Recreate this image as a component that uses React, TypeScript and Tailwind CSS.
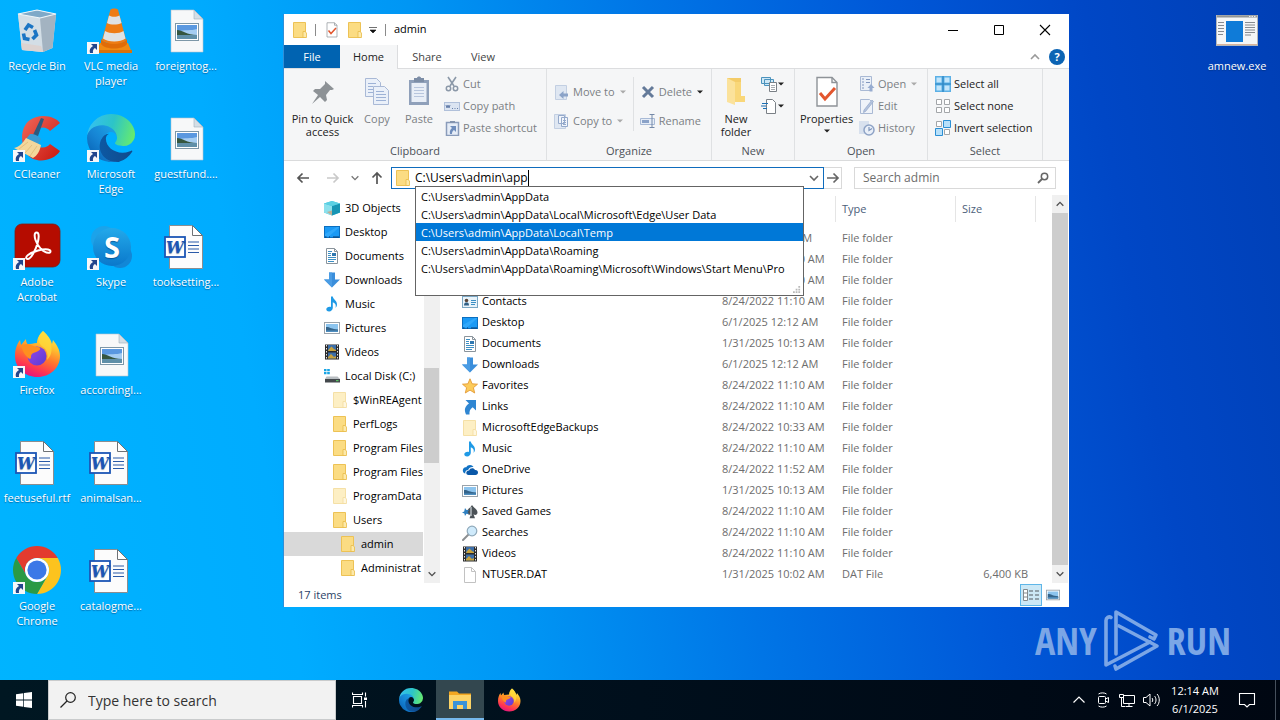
import React from "react";

type IconProps = { className?: string };
type Draw = (p: IconProps) => React.ReactElement;

/* ---------- small icons (16 unit grid) ---------- */

const Folder: Draw = ({ className = "size-4" }) => (
  <svg viewBox="0 0 16 16" className={className} aria-hidden="true">
    <path d="M1.500 .5h12v15h-12z" fill="#fbdc83" stroke="#edc255" />
    <path d="M11 9.500h2l1.500 1.500v4.500H11z" fill="#fde9a9" stroke="#e9bb49" strokeWidth=".8" />
  </svg>
);

const PaleFolder: Draw = ({ className = "size-4" }) => (
  <svg viewBox="0 0 16 16" className={className} aria-hidden="true">
    <path d="M1.500 .5h12v15h-12z" fill="#fdefc4" stroke="#f5e0a6" />
    <path d="M11 9.500h2l1.500 1.500v4.500H11z" fill="#fff6dc" stroke="#f2dc9e" strokeWidth=".8" />
  </svg>
);

const Objects3D: Draw = ({ className = "size-4" }) => (
  <svg viewBox="0 0 16 16" className={className} aria-hidden="true">
    <path d="M0 3.500 8 1l8 2.500v9L8 15.500l-8-3z" fill="#3fc3dc" />
    <path d="M0 3.500 8 6v9.500l-8-3z" fill="#8be0ec" />
    <path d="M8 6l8-2.500v9l-8 3z" fill="#1795b4" />
    <path d="M0 3.500 8 1l8 2.500L8 6z" fill="#5bd0e3" />
    <path d="M3 12l5-1.500v5z" fill="#e08a5a" opacity=".6" />
  </svg>
);

const DesktopIcon: Draw = ({ className = "size-4" }) => (
  <svg viewBox="0 0 16 16" className={className} aria-hidden="true">
    <rect x=".5" y="2.500" width="15" height="11" fill="#1b9af5" stroke="#0b6fc0" />
    <path d="M1 10 13 3h2.500L5 12.500H1z" fill="#3fb2ff" opacity=".6" />
    <path d="M1 13h1.500M5 13h1M9 13h6" stroke="#0a3d70" />
  </svg>
);

const DocumentIcon: Draw = ({ className = "size-4" }) => (
  <svg viewBox="0 0 16 16" className={className} aria-hidden="true">
    <path d="M2.500.5h8l3 3v12h-11z" fill="#fff" stroke="#8a949c" />
    <path d="M10.500.5v3h3" fill="none" stroke="#8a949c" />
    <path d="M4 3.500h4M4 5.500h3M4 7.500h3M4 9.500h8M4 11.500h8M4 13.500h6" stroke="#3c8fc4" />
    <rect x="8" y="5" width="4" height="3" fill="#2f78b0" />
  </svg>
);

const DownloadIcon: Draw = ({ className = "size-4" }) => (
  <svg viewBox="0 0 16 16" className={className} aria-hidden="true">
    <path d="M5 .5h6v7h5l-8 8-8-8h5z" fill="#3a8edb" />
    <path d="M5 .5h3v15l-8-8h5z" fill="#4a9ce4" />
  </svg>
);

const MusicIcon: Draw = ({ className = "size-4" }) => (
  <svg viewBox="0 0 16 16" className={className} aria-hidden="true">
    <path d="M7 .5h1.800c.3 3 4.400 4 4.200 8.300-.1 1.500-.9 2.500-1.500 3.200.8-3 .2-4.800-2.700-5.800v5.600c0 2-1.600 3.700-3.700 3.700S2.300 14.400 2.300 13.200c0-1.700 2.400-3 4.700-2.300z" fill="#1f9ae6" />
  </svg>
);

const PictureIcon: Draw = ({ className = "size-4" }) => (
  <svg viewBox="0 0 16 16" className={className} aria-hidden="true">
    <rect x=".5" y="2.500" width="15" height="11" fill="#fff" stroke="#9aa3ab" />
    <path d="M2 4h12v8H2z" fill="#8cc4ee" />
    <path d="M2 7c3-.6 5 2 12 2.500V12H2z" fill="#35648a" />
    <path d="M2 10.500h12V12H2z" fill="#4f8fc0" />
  </svg>
);

const VideoIcon: Draw = ({ className = "size-4" }) => (
  <svg viewBox="0 0 16 16" className={className} aria-hidden="true">
    <rect x="1" y=".5" width="14" height="15" fill="#2b2b2b" />
    <path d="M2.500 1v15M13.500 1v15" stroke="#e8e8e8" strokeDasharray="1.500 1.500" />
    <path d="M4 1h8v6H4zM4 8.500h8v6H4z" fill="#3c6ea8" />
    <path d="M5 5l2.500-2.500L10 5l2 1v1H4zM4 13l3-3 3 3 2-1v2.500H4z" fill="#c8a23c" />
  </svg>
);

const DiskIcon: Draw = ({ className = "size-4" }) => (
  <svg viewBox="0 0 16 16" className={className} aria-hidden="true">
    <path d="M0 1h2.500v2.300H0zM3.200 1h2.600v2.300H3.200zM0 4h2.500v2.300H0zM3.200 4h2.600v2.300H3.200z" fill="#17a4e4" />
    <path d="M2.500 8.500h11L16 11H1z" fill="#b9bec2" />
    <path d="M1 11h15v3.500H1z" fill="#43484c" />
    <path d="M12 12.700h2.500" stroke="#5fe06a" />
  </svg>
);

const ContactIcon: Draw = ({ className = "size-4" }) => (
  <svg viewBox="0 0 16 16" className={className} aria-hidden="true">
    <rect x=".5" y="2.500" width="15" height="11" fill="#e8f3fa" stroke="#7aa7c4" />
    <path d="M2 11.500c0-2.500 1-3 2.500-3s2.500.5 2.500 3z" fill="#2f5f85" />
    <circle cx="4.500" cy="6.500" r="1.800" fill="#5a4638" />
    <path d="M9 6.500h5M9 8.500h5M9 10.500h4" stroke="#3c8fc4" />
  </svg>
);

const StarIcon: Draw = ({ className = "size-4" }) => (
  <svg viewBox="0 0 16 16" className={className} aria-hidden="true">
    <path d="m8 .8 2.100 5 5.400.4-4.100 3.500 1.300 5.300L8 12.100 3.300 15l1.300-5.300L.5 6.200l5.400-.4z" fill="#fccb5a" stroke="#e39a35" strokeWidth=".9" />
  </svg>
);

const LinkIcon: Draw = ({ className = "size-4" }) => (
  <svg viewBox="0 0 16 16" className={className} aria-hidden="true">
    <path d="M3.500 1H14v10.500L10.700 8.300C8 10 7.200 12.500 7.500 15.500H4C1.800 10.500 3 7.500 7 4.600z" fill="#2f86d2" />
  </svg>
);

const OneDriveIcon: Draw = ({ className = "size-4" }) => (
  <svg viewBox="0 0 16 16" className={className} aria-hidden="true">
    <path d="M1 9.500C.2 6.500 2.800 5 4.300 5.300 5.500 2.300 10 2 11.500 5 8 4.800 6.500 6.500 6.200 8 3.800 8 3 10 3.300 11.500 2 11.300 1.200 10.500 1 9.500z" fill="#1272c4" />
    <path d="M4.300 11c0-1.600 1.200-2.600 2.800-2.400.6-3 4.900-3.300 5.900-.5 2-.2 3 1.200 3 2.500S15 13 13.500 13h-7C5.200 13 4.300 12.200 4.300 11z" fill="#0a58a8" />
  </svg>
);

const GamesIcon: Draw = ({ className = "size-4" }) => (
  <svg viewBox="0 0 16 16" className={className} aria-hidden="true">
    <path d="M10 1c2 3 5.500 4.500 5.500 7.500 0 2.500-2.500 3-4 1.800l1.500 4H7.500l1.500-4C7 11.500 5 10 5 8c0-3 3.500-4 5-7z" fill="#4b5257" />
    <path d="M3 4l1.500 2L7 6 5.500 8 7 10l-2.500-.3L3 12l-.6-2.500L0 8.500l2.200-1z" fill="#2f7fbf" />
    <path d="M9 3v9" stroke="#b5bcc0" strokeWidth="1.500" />
  </svg>
);

const SearchFolderIcon: Draw = ({ className = "size-4" }) => (
  <svg viewBox="0 0 16 16" className={className} aria-hidden="true">
    <path d="M7 9 1 15" stroke="#8c8f92" strokeWidth="2" strokeLinecap="round" />
    <circle cx="10" cy="6" r="4.800" fill="#cfeafb" stroke="#8fa9ba" strokeWidth="1.200" />
  </svg>
);

const BlankFile: Draw = ({ className = "size-4" }) => (
  <svg viewBox="0 0 16 16" className={className} aria-hidden="true">
    <path d="M2.500.5h7l4 4v11h-11z" fill="#fff" stroke="#c2c2c2" />
    <path d="M9.500.5v4h4" fill="none" stroke="#c2c2c2" />
  </svg>
);

const CheckPage: Draw = ({ className = "size-4" }) => (
  <svg viewBox="0 0 24 32" className={className} aria-hidden="true">
    <path d="M2 1.500h15l5 5V30H2z" fill="#fff" stroke="#8e9398" strokeWidth="1.400" />
    <path d="M17 1.500v5h5" fill="none" stroke="#8e9398" strokeWidth="1.400" />
    <path d="m5 17 5 6 10-11" fill="none" stroke="#e3562e" strokeWidth="3" />
  </svg>
);

const Chevron = ({ className = "size-3", up = false }: { className?: string; up?: boolean }) => (
  <svg viewBox="0 0 12 12" className={className} aria-hidden="true">
    <path d={up ? "m2 8 4-4 4 4" : "m2 4 4 4 4-4"} fill="none" stroke="currentColor" strokeWidth="1.600" />
  </svg>
);

const Caret = ({ className = "text-[#222]" }: IconProps) => (
  <svg viewBox="0 0 6 4" className={"h-1 w-1.5 shrink-0 " + className} aria-hidden="true">
    <path d="M0 .5h6L3 3.500z" fill="currentColor" />
  </svg>
);

/* ---------- desktop icons (48 unit grid) ---------- */

const ShortcutBadge = () => (
  <g>
    <rect x="0" y="36" width="12" height="12" fill="#f6f7f9" />
    <path d="M4 38h6v6l-2-2c-1.800 1-2.300 2.400-2 5H3c-.8-3 0-5.200 3-7z" fill="#23468c" />
  </g>
);

const RecycleBin: Draw = () => (
  <svg viewBox="0 0 48 48" className="size-12" aria-hidden="true">
    <path d="M5 8 24 4l19 4-3.500 34L30 46 9 44z" fill="#cfdbe4" />
    <path d="M5 8h0l22 4 3 34L9 44z" fill="#d3dee6" />
    <path d="M27 12 43 8l-3.500 34L30 46z" fill="#a3b3c1" />
    <path d="M5 8 24 4l19 4-16 4z" fill="#7fa9c8" stroke="#eff6fa" strokeWidth="1.200" />
    <path d="M8 37l20 3 2 6-21-2z" fill="#e0cfc8" opacity=".7" />
    <g fill="none" stroke="#1b75c4" strokeWidth="3.600">
      <path d="m12 24 3.500-5 4.500 2.500" />
      <path d="m21.500 24 2 5-4 4" />
      <path d="m16.500 33.500-5-1-1-5" />
    </g>
  </svg>
);

const Cone: Draw = () => (
  <svg viewBox="0 0 48 48" className="size-12" aria-hidden="true">
    <path d="M13 37h28l4 10H9z" fill="#f08a12" />
    <path d="M9 44h36v3H9z" fill="#d9720a" />
    <path d="M14 33c4 6 22 6 26 0v5c-4 6-22 6-26 0z" fill="#e06c08" />
    <path d="M23.500 3.500c1.500-1.500 6-1.500 7.500 0L39 34c-3 5-20 5-24 0z" fill="#ee7c14" />
    <path d="M22 9.500c3 1.800 7.500 1.800 10.500 0l2 7.500c-4 2-11 2-14.500 0z" fill="#dfe2e3" />
    <path d="M18 25c5 3 14 3 18.500 0l2 7.500c-5 4-17.500 4-22.500 0z" fill="#dfe2e3" />
    <ShortcutBadge />
  </svg>
);

const ImageFile: Draw = () => (
  <svg viewBox="0 0 48 48" className="size-12" aria-hidden="true">
    <path d="M9 4h23l9 9v33H9z" fill="#f7f8f9" stroke="#b9c4cc" strokeWidth=".6" />
    <path d="M32 4v9h9z" fill="#d4dee6" stroke="#9fb0bd" strokeWidth=".6" />
    <rect x="13.500" y="17.500" width="23" height="17" fill="#fff" stroke="#7d97a8" />
    <path d="M15 19h20v14H15z" fill="#a5cdf2" />
    <path d="M15 19h20v4c-6 2-12 0-20 3z" fill="#5a98e0" />
    <path d="M15 24c5 0 10 5 20 5v1H15z" fill="#35563f" />
    <path d="M15 29h20v4H15z" fill="#5f8fa8" />
  </svg>
);

const WordFile: Draw = () => (
  <svg viewBox="0 0 48 48" className="size-12" aria-hidden="true">
    <path d="M7.500 3.500h22l11 10v33h-33z" fill="#fcfcfc" stroke="#8b8d90" />
    <path d="M30.500 3.500v10h10z" fill="#fff" stroke="#6f7275" />
    <path d="M26 20h11M26 23.500h11M26 27h11M26 30.500h11" stroke="#2a5aa8" strokeWidth="1.200" />
    <rect x="3" y="15" width="20" height="20" fill="#fff" stroke="#1c56b5" strokeWidth="1.800" />
    <text x="13" y="31" textAnchor="middle" fontFamily="'DejaVu Serif', serif" fontStyle="italic" fontWeight="700" fontSize="16" fill="#1c56b5">W</text>
  </svg>
);

const CCleanerIcon: Draw = () => (
  <svg viewBox="0 0 48 48" className="size-12" aria-hidden="true">
    <defs>
      <linearGradient id="cc" x1="0" y1="0" x2="1" y2="1">
        <stop offset="0" stopColor="#f0685a" />
        <stop offset="1" stopColor="#c8170f" />
      </linearGradient>
    </defs>
    <path d="M47 9C42 2 27-1 17 6S7 30 14 40s26 8 33-3l-10-7c-3 4-9 5-13 1s-4-11 0-15 10-3 13 1z" fill="url(#cc)" />
    <path d="m28 4 3 1-7 20-5-2z" fill="#2d5a7f" />
    <path d="M17 20c5 0 9 2 11 5l-3 6-12-6z" fill="#3a9bd2" />
    <path d="M13 24 28 31c-1 6-4 11-8 13L1 34c5-1 9-5 12-10z" fill="#f3d79c" />
    <path d="m6 35 9-7M12 39l7-8M17 42l7-10" stroke="#e3c07e" strokeWidth="1" />
    <ShortcutBadge />
  </svg>
);

const EdgeMark = ({ className }: IconProps) => (
  <svg viewBox="0 0 256 256" className={className} aria-hidden="true">
    <defs>
      <linearGradient id="edgeA" x1="0" y1=".5" x2="1" y2=".5">
        <stop offset="0" stopColor="#0c59a4" />
        <stop offset="1" stopColor="#114a8b" />
      </linearGradient>
      <linearGradient id="edgeB" x1=".8" y1=".2" x2=".2" y2=".9">
        <stop offset="0" stopColor="#1b9de2" />
        <stop offset=".5" stopColor="#1684d4" />
        <stop offset="1" stopColor="#0a67b8" />
      </linearGradient>
      <linearGradient id="edgeC" x1="0" y1=".4" x2="1" y2=".6">
        <stop offset="0" stopColor="#35c1f1" />
        <stop offset=".5" stopColor="#2cc4c8" />
        <stop offset="1" stopColor="#66eb6e" />
      </linearGradient>
    </defs>
    <path d="M235.680 195.460a93.730 93.730 0 01-10.540 4.710 101.870 101.870 0 01-35.900 6.460c-47.320 0-88.540-32.550-88.540-74.320A31.480 31.480 0 01117.130 105c-42.800 1.800-53.800 46.400-53.800 72.530 0 73.880 68.090 81.370 82.760 81.370 7.910 0 19.840-2.300 27-4.560l1.310-.440a128.340 128.340 0 0066.600-52.800 4 4 0 00-5.320-5.640z" fill="url(#edgeA)" />
    <path d="M105.730 241.420A79.200 79.200 0 0183 220.080a80.720 80.720 0 0129.490-120c3.120-1.470 8.450-4.130 15.540-4a32.350 32.350 0 0125.690 13 31.880 31.880 0 016.360 18.660c0-.210 24.460-79.600-80-79.600-43.900 0-80 41.660-80 78.210a130.150 130.150 0 0012.110 56 128 128 0 00156.380 67.110 75.550 75.550 0 01-62.780-8z" fill="url(#edgeB)" />
    <path d="M152.330 148.860c-.810 1-3.300 2.500-3.300 5.660 0 2.610 1.700 5.120 4.720 7.230 14.380 10 41.490 8.680 41.560 8.680a59.560 59.560 0 0030.270-8.350A61.380 61.380 0 00256 109.330c.260-22.410-8-37.310-11.340-43.910C223.460 23.950 177.720 0 128 0A128 128 0 000 126.200c.480-36.540 36.800-66.050 80-66.050 3.500 0 23.460.340 42 10.070 16.340 8.580 24.900 18.940 30.850 29.210 6.180 10.670 7.280 24.150 7.280 29.520s-2.740 13.330-7.800 19.910z" fill="url(#edgeC)" />
  </svg>
);

const EdgeIcon: Draw = () => (
  <span className="relative block size-12">
    <EdgeMark className="size-12" />
    <svg viewBox="0 0 48 48" className="absolute inset-0 size-12" aria-hidden="true"><ShortcutBadge /></svg>
  </span>
);

const AcrobatIcon: Draw = () => (
  <svg viewBox="0 0 48 48" className="size-12" aria-hidden="true">
    <rect x="2" y="2" width="45" height="43" rx="7" fill="#b50c00" stroke="#7d1c14" strokeWidth=".8" />
    <path d="M23.500 10.500c3 0 2.500 5.500 1 11-2 7-6.500 15-9.500 15.500-2.500.4-2.500-2.300 0-4 5-3.500 15-6.500 20-5.500 3.500.7 3 3.300.3 3.300C30 30.800 24.500 24 22.500 18c-1-3.200-1.500-7.500 1-7.500z" fill="none" stroke="#fff" strokeWidth="2" />
    <ShortcutBadge />
  </svg>
);

const SkypeIcon: Draw = () => (
  <svg viewBox="0 0 48 48" className="size-12" aria-hidden="true">
    <defs>
      <linearGradient id="sk" x1="0" y1="0" x2="0" y2="1">
        <stop offset="0" stopColor="#23a9ea" />
        <stop offset="1" stopColor="#0a78cb" />
      </linearGradient>
    </defs>
    <circle cx="17" cy="17" r="13" fill="#1ba3ea" />
    <circle cx="33" cy="34" r="12" fill="#1287d6" />
    <circle cx="25" cy="25" r="19" fill="url(#sk)" />
    <text x="25" y="35.500" textAnchor="middle" fontFamily="'Open Sans', sans-serif" fontWeight="700" fontSize="29" fill="#fff">S</text>
    <ShortcutBadge />
  </svg>
);

const FirefoxMark = ({ className }: IconProps) => (
  <svg viewBox="0 0 48 48" className={className} aria-hidden="true">
    <defs>
      <linearGradient id="fx" x1=".75" y1="0" x2=".35" y2="1">
        <stop offset="0" stopColor="#fff24f" />
        <stop offset=".3" stopColor="#ffc02f" />
        <stop offset=".55" stopColor="#ff7a2c" />
        <stop offset=".8" stopColor="#ff3750" />
        <stop offset="1" stopColor="#e3157e" />
      </linearGradient>
      <linearGradient id="fp" x1="0" y1="0" x2="1" y2="1">
        <stop offset="0" stopColor="#9747ea" />
        <stop offset="1" stopColor="#5b3bd0" />
      </linearGradient>
    </defs>
    <path d="M30 1c5 4 8 9 9 13l1-4c4 5 7 10 7 16 0 12-10 21-22.500 21S2 38 2 26c0-7 2-12 5-16l1 5 5-6c0 2 .5 4 1.500 5 3 0 6-.5 9.500-1C24 8 27 4 30 1z" fill="url(#fx)" />
    <circle cx="24" cy="26" r="9.500" fill="url(#fp)" />
    <path d="M8 15l6-1c3 0 6 2 9 3 3 0 5 .5 4 2.500-3 3-6 2.500-8 4.500-2 2 0 4-2 5-4-2-7-6-9-14z" fill="#ff8f1f" />
    <path d="M30 1c-7 6-5 12 0 16 5 3 5 9 4 13 8-7 5-21-4-29z" fill="#ffd93b" opacity=".75" />
  </svg>
);

const FirefoxIcon: Draw = () => (
  <span className="relative block size-12">
    <FirefoxMark className="size-12" />
    <svg viewBox="0 0 48 48" className="absolute inset-0 size-12" aria-hidden="true"><ShortcutBadge /></svg>
  </span>
);

const ChromeIcon: Draw = () => (
  <svg viewBox="0 0 48 48" className="size-12" aria-hidden="true">
    <path d="M24 12h20.780A24 24 0 0 0 3.220 12l10.390 18A12 12 0 0 1 24 12z" fill="#e33b2e" />
    <path d="M44.780 12A24 24 0 0 1 24 48l10.390-18A12 12 0 0 0 24 12z" fill="#fcc31e" />
    <path d="M3.220 12A24 24 0 0 0 24 48l10.390-18a12 12 0 0 1-20.780 0z" fill="#2b9a45" />
    <circle cx="24" cy="24" r="12" fill="#fff" />
    <circle cx="24" cy="24" r="9.600" fill="#3b78e7" />
    <ShortcutBadge />
  </svg>
);

const ExeIcon: Draw = () => (
  <svg viewBox="0 0 48 48" className="size-12" aria-hidden="true">
    <rect x="3.500" y="9.500" width="41" height="30" fill="#f4f6f7" stroke="#b4b7ba" />
    <path d="M4 10.500h40" stroke="#8f9496" strokeWidth="2" />
    <path d="M36 10.500h7" stroke="#e9e9e9" strokeWidth="1" strokeDasharray="1.500 1" />
    <rect x="13" y="15" width="17" height="21" fill="#0f7bd8" />
    <path d="M5 16.500h6M5 19.500h6M5 22.500h6M5 25.500h6M5 28.500h5M32 16.500h10M32 19h10M32 21.500h10M32 24h10M32 26.500h10M32 29h6" stroke="#6a7075" strokeWidth=".8" />
    <path d="M4 38.500h40" stroke="#d9b49b" />
  </svg>
);

const desktopItems: { label: string; icon: Draw }[] = [
  { label: "Recycle Bin", icon: RecycleBin },
  { label: "CCleaner", icon: CCleanerIcon },
  { label: "Adobe Acrobat", icon: AcrobatIcon },
  { label: "Firefox", icon: FirefoxIcon },
  { label: "feetuseful.rtf", icon: WordFile },
  { label: "Google Chrome", icon: ChromeIcon },
  { label: "VLC media player", icon: Cone },
  { label: "Microsoft Edge", icon: EdgeIcon },
  { label: "Skype", icon: SkypeIcon },
  { label: "accordingl...", icon: ImageFile },
  { label: "animalsan...", icon: WordFile },
  { label: "catalogme...", icon: WordFile },
  { label: "foreigntog...", icon: ImageFile },
  { label: "guestfund....", icon: ImageFile },
  { label: "tooksetting...", icon: WordFile },
];

function DesktopItem({ label, icon: Icon }: { label: string; icon: Draw }) {
  return (
    <button type="button" className="flex w-[74px] flex-col items-center gap-1 pt-1.5 text-center text-[11px] leading-[15px] text-white [text-shadow:0_1px_1px_rgba(0,40,90,0.5)]">
      <Icon />
      <span className="px-1">{label}</span>
    </button>
  );
}

/* ---------- ribbon ---------- */

function Group({ title, children, className = "" }: { title: string; children: React.ReactNode; className?: string }) {
  return (
    <section className={"flex flex-col border-r border-[#dfe1e3] pt-1 " + className}>
      <div className="flex flex-1">{children}</div>
      <h2 className="pb-[1px] text-center text-[11px] leading-[16px] text-[#4c5157]">{title}</h2>
    </section>
  );
}

function Small({ icon, label, caret, dim = true }: { icon: React.ReactNode; label: string; caret?: string; dim?: boolean }) {
  return (
    <button type="button" className={"flex h-[22px] items-center gap-[3px] whitespace-nowrap " + (dim ? "text-[#7b7f84]" : "text-[#222]")}>
      {icon}
      <span>{label}</span>
      {caret && <Caret className={"ml-0.5 " + caret} />}
    </button>
  );
}

function Big({ icon, lines, className = "" }: { icon: React.ReactNode; lines: string[]; className?: string }) {
  return (
    <button type="button" className={"flex flex-col items-center pt-[3px] leading-[13px] " + className}>
      <span className="flex h-9 items-start justify-center">{icon}</span>
      {lines.map((l) => (
        <span key={l} className="whitespace-nowrap">{l}</span>
      ))}
    </button>
  );
}

const PinArt = () => (
  <svg viewBox="0 0 32 32" className="size-8" aria-hidden="true">
    <path d="m18 5 9 8-2 1-2 0-4 5 1 5-2 2-5-5-8 7 6-9-5-4 2-2 5 0 5-5z" fill="#8d9296" />
  </svg>
);
const CopyArt = () => (
  <svg viewBox="0 0 28 32" className="h-8 w-7" aria-hidden="true">
    <g fill="#eaf0f9" stroke="#a9b9d6">
      <path d="M2.500 2.500h11l4 4v14h-15z" />
      <path d="M10.500 10.500h11l4 4v14h-15z" />
    </g>
    <path d="M5 7.500h8M5 10.500h5M5 13.500h5M5 16.500h5M13 15.500h8M13 18.500h10M13 21.500h10M13 24.500h10" stroke="#9db2d6" />
  </svg>
);
const PasteArt = () => (
  <svg viewBox="0 0 28 32" className="h-8 w-7" aria-hidden="true">
    <path d="M4 4h20v25H4z" fill="#8fa0ba" />
    <path d="M6.500 7h15v19h-15z" fill="#e8eef7" />
    <path d="M9 2h3c0-2 4-2 4 0h3v4H9z" fill="#7c8da6" />
    <path d="M9 11.500h10M9 14.500h10M9 17.500h10M9 20.500h10" stroke="#b7c5dd" />
  </svg>
);
const CutArt = () => (
  <svg viewBox="0 0 16 16" className="size-4" aria-hidden="true">
    <path d="M4 1l6 9M12 1l-6 9" stroke="#8b98a8" strokeWidth="1.600" />
    <circle cx="4.500" cy="12.500" r="2.200" fill="none" stroke="#8b98a8" strokeWidth="1.500" />
    <circle cx="11.500" cy="12.500" r="2.200" fill="none" stroke="#8b98a8" strokeWidth="1.500" />
  </svg>
);
const PathArt = () => (
  <svg viewBox="0 0 16 16" className="size-4" aria-hidden="true">
    <rect x=".5" y="4.500" width="15" height="8" fill="#dbe4f1" stroke="#b0c0da" />
    <path d="m2 7 1 3 1-3 1 3 1-3M8 10.500h1M10.500 10.500h1M13 10.500h1" fill="none" stroke="#6780ab" />
  </svg>
);
const PasteShortcutArt = () => (
  <svg viewBox="0 0 16 16" className="size-4" aria-hidden="true">
    <path d="M2.500 2.500h12v13h-12z" fill="#e6edf7" stroke="#8a9cba" strokeWidth="1.500" />
    <path d="M6 1h5v2H6z" fill="#8393ad" />
    <path d="M6 6h6v6l-2-2c-1.500 1-2 2-2 4H6c-.5-3 0-4 2-6z" fill="#6f8dbc" />
  </svg>
);
const MoveArt = () => (
  <svg viewBox="0 0 16 16" className="size-4" aria-hidden="true">
    <path d="M1.500 1.500h11v14h-11z" fill="#dfe7f2" stroke="#c2cfe2" />
    <path d="M14 9.500H9.500V7L5 11l4.500 4v-2.500H14z" fill="#8ba3c8" />
  </svg>
);
const CopyToArt = () => (
  <svg viewBox="0 0 16 16" className="size-4" aria-hidden="true">
    <path d="M.5 1.500h11v14H.5z" fill="#dfe7f2" stroke="#c2cfe2" />
    <path d="M4.500 2.500h6v8h-6zM7.500 4.500h6v9h-6z" fill="#f1f5fb" stroke="#94a9cb" />
    <path d="M9 7.500h3M9 9.500h3M9 11.500h3" stroke="#94a9cb" />
  </svg>
);
const DeleteArt = () => (
  <svg viewBox="0 0 16 16" className="size-4" aria-hidden="true">
    <path d="m3 3 10 10M13 3 3 13" stroke="#647a99" strokeWidth="3" />
  </svg>
);
const RenameArt = () => (
  <svg viewBox="0 0 16 16" className="size-4" aria-hidden="true">
    <path d="M.5 5.500h14v6H.500z" fill="#e6edf7" stroke="#a8bad6" />
    <path d="M2 7h7v3H2z" fill="#8aa2c8" />
    <path d="M9.500 1.500h5M12 1.500v13M9.500 14.500h5" stroke="#7489a8" />
  </svg>
);
const NewFolderArt = () => (
  <svg viewBox="0 0 24 32" className="h-8 w-6" aria-hidden="true">
    <path d="M3 2h14v24l-3 0H3z" fill="#f4cc68" />
    <path d="M3 2l8 4v23l-8-3z" fill="#fbe29b" />
    <path d="M11 6h6l0 14h4v6l-10 0z" fill="#f9d779" />
  </svg>
);
const NewItemArt = () => (
  <svg viewBox="0 0 16 16" className="size-4" aria-hidden="true">
    <path d="M.5 1.500h9v6h-9zM3.500 3.500h9v6h-9z" fill="#cfe8f6" stroke="#4b93bd" />
    <path d="M8.500 6.500h7v9h-7z" fill="#fff" stroke="#7a8086" />
    <path d="M10 9.500h4M10 11.500h4M10 13.500h4" stroke="#a7acb1" />
  </svg>
);
const EasyAccessArt = () => (
  <svg viewBox="0 0 16 16" className="size-4" aria-hidden="true">
    <path d="M5.500 1.500h6l3 3v11h-9z" fill="#fff" stroke="#7a8086" />
    <path d="M1 5.500h6M0 8h5M2 10.500h4" stroke="#1c6fb4" strokeWidth="1.200" />
  </svg>
);
const OpenArt = () => (
  <svg viewBox="0 0 16 16" className="size-4" aria-hidden="true">
    <path d="M1.500.5h11v14h-11z" fill="#eaf0f8" stroke="#a9b9d4" />
    <path d="M3 3h2M3 6h2M3 9h2M3 12h2M7 3.500h4M7 6.500h4" stroke="#8298c0" />
    <path d="M12 8l3.500 4H13.500v3.500h-3V12H8.500z" fill="#97acd0" />
  </svg>
);
const EditArt = () => (
  <svg viewBox="0 0 16 16" className="size-4" aria-hidden="true">
    <path d="M1.500 1.500h9l3 3v11h-12z" fill="#eff3f9" stroke="#a9b9d4" />
    <path d="m14.500 3.500-8 10-2 1 .5-2.500 8-10z" fill="#b4c3de" stroke="#93a7c9" strokeWidth=".7" />
  </svg>
);
const HistoryArt = () => (
  <svg viewBox="0 0 16 16" className="size-4" aria-hidden="true">
    <path d="M0 1h10v13H0z" fill="#d8e1ee" />
    <circle cx="10" cy="10" r="5" fill="#e9eff8" stroke="#8ea3c6" strokeWidth="1.500" />
    <path d="M10 7v3.500l3-2" fill="none" stroke="#7d94bb" strokeWidth="1.200" />
  </svg>
);
const tile = "M1.500 1.500h5v5h-5zM9.500 1.500h5v5h-5zM1.500 9.500h5v5h-5zM9.500 9.500h5v5h-5z";
const SelectAllArt = () => (
  <svg viewBox="0 0 16 16" className="size-4" aria-hidden="true">
    <path d="M0 0h16v16H0z" fill="#5bb0e6" />
    <path d={tile} fill="#c2e5fb" />
    <path d="M8 0v16M0 8h16" stroke="#2b84c2" strokeWidth="1.200" />
  </svg>
);
const SelectNoneArt = () => (
  <svg viewBox="0 0 16 16" className="size-4" aria-hidden="true">
    <path d={tile} fill="#fff" stroke="#a3a6a9" />
  </svg>
);
const InvertArt = () => (
  <svg viewBox="0 0 16 16" className="size-4" aria-hidden="true">
    <path d={tile} fill="#fff" stroke="#a3a6a9" />
    <path d="M8.500.5h7v7h-7zM.5 8.500h7v7h-7z" fill="#b7e0fa" stroke="#2b8fd4" />
  </svg>
);

/* ---------- data ---------- */

const tree: { label: string; icon: Draw; depth: number; active?: boolean }[] = [
  { label: "3D Objects", icon: Objects3D, depth: 0 },
  { label: "Desktop", icon: DesktopIcon, depth: 0 },
  { label: "Documents", icon: DocumentIcon, depth: 0 },
  { label: "Downloads", icon: DownloadIcon, depth: 0 },
  { label: "Music", icon: MusicIcon, depth: 0 },
  { label: "Pictures", icon: PictureIcon, depth: 0 },
  { label: "Videos", icon: VideoIcon, depth: 0 },
  { label: "Local Disk (C:)", icon: DiskIcon, depth: 0 },
  { label: "$WinREAgent", icon: PaleFolder, depth: 1 },
  { label: "PerfLogs", icon: Folder, depth: 1 },
  { label: "Program Files", icon: Folder, depth: 1 },
  { label: "Program Files", icon: Folder, depth: 1 },
  { label: "ProgramData", icon: PaleFolder, depth: 1 },
  { label: "Users", icon: Folder, depth: 1 },
  { label: "admin", icon: Folder, depth: 2, active: true },
  { label: "Administrat", icon: Folder, depth: 2 },
];
const indents = ["pl-10", "pl-12", "pl-14"];

type FileRow = { name?: string; icon?: Draw; date: string; type: string; size?: string };

const files: FileRow[] = [
  { date: "6/1/2025 9:12 AM", type: "File folder" },
  { date: "8/24/2022 11:10 AM", type: "File folder" },
  { date: "8/24/2022 11:10 AM", type: "File folder" },
  { name: "Contacts", icon: ContactIcon, date: "8/24/2022 11:10 AM", type: "File folder" },
  { name: "Desktop", icon: DesktopIcon, date: "6/1/2025 12:12 AM", type: "File folder" },
  { name: "Documents", icon: DocumentIcon, date: "1/31/2025 10:13 AM", type: "File folder" },
  { name: "Downloads", icon: DownloadIcon, date: "6/1/2025 12:12 AM", type: "File folder" },
  { name: "Favorites", icon: StarIcon, date: "8/24/2022 11:10 AM", type: "File folder" },
  { name: "Links", icon: LinkIcon, date: "8/24/2022 11:10 AM", type: "File folder" },
  { name: "MicrosoftEdgeBackups", icon: PaleFolder, date: "8/24/2022 10:33 AM", type: "File folder" },
  { name: "Music", icon: MusicIcon, date: "8/24/2022 11:10 AM", type: "File folder" },
  { name: "OneDrive", icon: OneDriveIcon, date: "8/24/2022 11:52 AM", type: "File folder" },
  { name: "Pictures", icon: PictureIcon, date: "1/31/2025 10:13 AM", type: "File folder" },
  { name: "Saved Games", icon: GamesIcon, date: "8/24/2022 11:10 AM", type: "File folder" },
  { name: "Searches", icon: SearchFolderIcon, date: "8/24/2022 11:10 AM", type: "File folder" },
  { name: "Videos", icon: VideoIcon, date: "8/24/2022 11:10 AM", type: "File folder" },
  { name: "NTUSER.DAT", icon: BlankFile, date: "1/31/2025 10:02 AM", type: "DAT File", size: "6,400 KB" },
];

const suggestions = [
  "C:\\Users\\admin\\AppData",
  "C:\\Users\\admin\\AppData\\Local\\Microsoft\\Edge\\User Data",
  "C:\\Users\\admin\\AppData\\Local\\Temp",
  "C:\\Users\\admin\\AppData\\Roaming",
  "C:\\Users\\admin\\AppData\\Roaming\\Microsoft\\Windows\\Start Menu\\Pro",
];

/* ---------- explorer window ---------- */

function TitleBar() {
  return (
    <header className="flex h-[31px] items-center text-[11px]">
      <Folder className="ml-2 size-4" />
      <span className="mx-[7px] h-3 w-px bg-[#8b8b8b]" />
      <CheckPage className="ml-0.5 h-4 w-3.5" />
      <Folder className="ml-2 size-4" />
      <svg viewBox="0 0 8 8" className="ml-1.5 size-2" aria-hidden="true"><path d="M0 1.500h8M1 4h6L4 7z" fill="#111" stroke="#111" strokeWidth=".6" /></svg>
      <span className="mx-2 h-3 w-px bg-[#8b8b8b]" />
      <h1 className="text-black">admin</h1>
      <div className="ml-auto flex">
        <button type="button" aria-label="Minimize" className="grid h-[30px] w-[46px] place-items-center"><svg viewBox="0 0 12 12" className="size-3" aria-hidden="true"><path d="M1 6.500h10" stroke="#000" /></svg></button>
        <button type="button" aria-label="Maximize" className="grid h-[30px] w-[46px] place-items-center"><svg viewBox="0 0 12 12" className="size-3" aria-hidden="true"><path d="M1.500 1.500h9v9h-9z" fill="none" stroke="#000" /></svg></button>
        <button type="button" aria-label="Close" className="mr-px grid h-[30px] w-[46px] place-items-center"><svg viewBox="0 0 12 12" className="size-3" aria-hidden="true"><path d="m1 1 10 10M11 1 1 11" stroke="#000" strokeWidth="1.100" /></svg></button>
      </div>
    </header>
  );
}

function Tabs() {
  return (
    <nav className="flex h-6 items-stretch border-b border-[#dcdddf] text-[11px] text-[#444]">
      <button type="button" className="w-14 bg-[#0063b1] pt-px text-white">File</button>
      <button type="button" className="-mb-px w-[58px] border-r border-[#dcdddf] bg-[#f5f6f7] text-[#222]">Home</button>
      <button type="button" className="w-[58px] pt-px">Share</button>
      <button type="button" className="w-[54px] pt-px">View</button>
      <div className="ml-auto flex items-center gap-2 pr-1">
        <Chevron up className="size-3 text-[#9a9a9a]" />
        <button type="button" aria-label="Help" className="grid size-4 place-items-center rounded-full bg-[#0c64b4] text-[11px] leading-none font-bold text-white">?</button>
      </div>
    </nav>
  );
}

function Ribbon() {
  return (
    <div className="flex h-[92px] border-b border-[#dadbdc] bg-[#f5f6f7] text-[11px] text-[#222]">
      <Group title="Clipboard" className="w-[263px]">
        <Big icon={<PinArt />} lines={["Pin to Quick", "access"]} className="w-[77px]" />
        <Big icon={<CopyArt />} lines={["Copy"]} className="w-8 text-[#7b7f84]" />
        <Big icon={<PasteArt />} lines={["Paste"]} className="ml-2 w-9 text-[#7b7f84]" />
        <div className="ml-[7px] flex flex-col">
          <Small icon={<CutArt />} label="Cut" />
          <Small icon={<PathArt />} label="Copy path" />
          <Small icon={<PasteShortcutArt />} label="Paste shortcut" />
        </div>
      </Group>
      <Group title="Organize" className="w-[165px]">
        <div className="flex flex-col gap-[7px] pt-2 pl-[7px]">
          <Small icon={<MoveArt />} label="Move to" caret="text-[#aaa]" />
          <Small icon={<CopyToArt />} label="Copy to" caret="text-[#aaa]" />
        </div>
        <div className="mt-1 mb-3 ml-auto w-px bg-[#dfe1e3]" />
        <div className="flex flex-col gap-[7px] pt-2 pr-2 pl-1.5">
          <Small icon={<DeleteArt />} label="Delete" caret="text-[#222]" />
          <Small icon={<RenameArt />} label="Rename" />
        </div>
      </Group>
      <Group title="New" className="w-[83px]">
        <Big icon={<NewFolderArt />} lines={["New", "folder"]} className="w-12" />
        <div className="ml-px flex flex-col">
          <button type="button" aria-label="New item" className="flex h-[22px] items-center gap-px"><NewItemArt /><Caret /></button>
          <button type="button" aria-label="Easy access" className="flex h-[22px] items-center gap-px"><EasyAccessArt /><Caret /></button>
        </div>
      </Group>
      <Group title="Open" className="w-[133px]">
        <button type="button" className="flex w-[63px] flex-col items-center pt-[3px] leading-[13px]">
          <span className="flex h-9 items-start justify-center"><CheckPage className="h-8 w-6" /></span>
          <span>Properties</span>
          <Caret className="mt-1 text-[#222]" />
        </button>
        <div className="ml-px flex flex-col">
          <Small icon={<OpenArt />} label="Open" caret="text-[#aaa]" />
          <Small icon={<EditArt />} label="Edit" />
          <Small icon={<HistoryArt />} label="History" />
        </div>
      </Group>
      <Group title="Select" className="w-[115px]">
        <div className="flex flex-col pl-[7px]">
          <Small dim={false} icon={<SelectAllArt />} label="Select all" />
          <Small dim={false} icon={<SelectNoneArt />} label="Select none" />
          <Small dim={false} icon={<InvertArt />} label="Invert selection" />
        </div>
      </Group>
    </div>
  );
}

const Arrow = ({ d, className }: { d: string; className: string }) => (
  <svg viewBox="0 0 14 14" className={"size-3.5 " + className} aria-hidden="true">
    <path d={d} fill="none" stroke="currentColor" strokeWidth="1.700" />
  </svg>
);

function AddressRow() {
  return (
    <div className="flex h-[34px] items-center pr-[13px] pl-3 text-[11px]">
      <button type="button" aria-label="Back"><Arrow d="M13 7H2M6.500 2.500 2 7l4.500 4.500" className="text-[#555]" /></button>
      <button type="button" aria-label="Forward" className="ml-4"><Arrow d="M1 7h11M7.500 2.500 12 7l-4.500 4.500" className="text-[#c9c9c9]" /></button>
      <button type="button" aria-label="Recent locations" className="ml-2.5"><Chevron className="size-2.5 text-[#777]" /></button>
      <button type="button" aria-label="Up" className="ml-2.5"><Arrow d="M7 13V2M2.500 6.500 7 2l4.500 4.500" className="text-[#555]" /></button>
      <div className="relative ml-[7px] flex h-[22px] flex-1 items-center border border-[#0f6cbd] bg-white">
        <Folder className="ml-[3px] size-4" />
        <input aria-label="Address" defaultValue="C:\Users\admin\app" className="ml-1 [field-sizing:content] bg-transparent text-[12px] text-black outline-none" />
        <span className="h-4 w-px bg-black" />
        <button type="button" aria-label="Previous locations" className="mr-[3px] ml-auto"><Chevron className="size-3 text-[#666]" /></button>
        <ul role="listbox" aria-label="Suggestions" className="absolute top-[18px] right-[19px] left-[23px] z-10 h-[110px] overflow-hidden border border-[#646464] bg-white text-[11px] leading-5 text-black">
          {suggestions.map((s, i) => (
            <li key={s} role="option" aria-selected={i === 2} className={"h-[18px] pl-[5px] whitespace-nowrap " + (i === 2 ? "bg-[#0078d7] text-white" : "")}>{s}</li>
          ))}
          <svg viewBox="0 0 9 9" className="absolute right-0.5 bottom-px size-2" aria-hidden="true">
            <path d="M6 0h2v2H6zM3 3h2v2H3zM6 3h2v2H6zM0 6h2v2H0zM3 6h2v2H3zM6 6h2v2H6z" fill="#b9b9b9" />
          </svg>
        </ul>
      </div>
      <button type="button" aria-label="Go" className="grid h-[22px] w-[18px] place-items-center border border-l-0 border-[#d9d9d9]"><Arrow d="M1 7h11M7.500 2.500 12 7l-4.500 4.500" className="text-[#666]" /></button>
      <label className="ml-3 flex h-[22px] w-[202px] items-center border border-[#d9d9d9] pr-1.5 pl-2">
        <input aria-label="Search admin" placeholder="Search admin" className="min-w-0 flex-1 bg-transparent text-[12px] outline-none placeholder:text-[#6d6d6d]" />
        <svg viewBox="0 0 12 12" className="size-3" aria-hidden="true"><circle cx="7.500" cy="4.500" r="3.200" fill="none" stroke="#666" strokeWidth="1.500" /><path d="M5 7 1 11" stroke="#666" strokeWidth="1.800" /></svg>
      </label>
    </div>
  );
}

function Sidebar() {
  return (
    <aside className="flex w-[156px] shrink-0">
      <ul className="w-[139px] overflow-hidden pt-px">
        {tree.map((t, i) => (
          <li key={i} className={"flex h-6 items-center gap-[5px] whitespace-nowrap text-black " + indents[t.depth] + (t.active ? " bg-[#d9d9d9]" : "")}>
            <t.icon className="size-4 shrink-0" />
            <span>{t.label}</span>
          </li>
        ))}
      </ul>
      <div className="ml-px flex w-4 flex-col bg-[#f0f0f0]">
        <div className="flex-[175]" />
        <div className="mr-px flex-[96] bg-[#cdcdcd]" />
        <div className="grid flex-[117] place-items-end justify-center pb-1"><Chevron className="size-2.5 text-[#505050]" /></div>
      </div>
    </aside>
  );
}

function FileTable() {
  return (
    <div className="min-w-0 flex-1 overflow-hidden pt-px pl-[22px]">
      <table className="w-full table-fixed border-collapse text-left">
        <colgroup>
          <col />
          <col className="w-[120px]" />
          <col className="w-[120px]" />
          <col className="w-[66px]" />
          <col className="w-6" />
        </colgroup>
        <thead>
          <tr className="h-8 align-top text-[#4c607a]">
            <th aria-label="Name" />
            <th aria-label="Date modified"><div className="mr-[6px] h-[26px] border-r border-[#e5e5e5]" /></th>
            <th className="font-normal"><div className="mr-[6px] h-[26px] border-r border-[#e5e5e5] leading-[26px]">Type</div></th>
            <th className="font-normal"><div className="-mr-2 h-[26px] border-r border-[#e5e5e5] leading-[26px]">Size</div></th>
            <th aria-hidden="true" />
          </tr>
        </thead>
        <tbody>
          {files.map(({ name, icon: Icon, date, type, size }, i) => (
            <tr key={i} className="h-[21px] whitespace-nowrap text-[#6d6d6d]">
              <td className="p-0"><span className="flex items-center gap-1 text-black">{Icon && <Icon className="size-4" />}{name}</span></td>
              <td className="p-0">{date}</td>
              <td className="p-0">{type}</td>
              <td className="p-0 text-right">{size}</td>
              <td className="p-0" />
            </tr>
          ))}
        </tbody>
      </table>
    </div>
  );
}

function ExplorerWindow() {
  return (
    <section aria-label="admin" className="absolute top-3.5 left-[283px] flex h-[593px] w-[786px] flex-col border-l border-[#2f8fd8] bg-white">
      <TitleBar />
      <Tabs />
      <Ribbon />
      <AddressRow />
      <div className="flex min-h-0 flex-1 text-[11px]">
        <Sidebar />
        <FileTable />
        <div className="mr-px flex w-4 flex-col items-center justify-between bg-[#f0f0f0]">
          <Chevron up className="my-1 size-2.5 text-[#505050]" />
          <div className="mr-px w-full flex-1 bg-[#cdcdcd]" />
          <Chevron className="my-1 size-2.5 text-[#505050]" />
        </div>
      </div>
      <footer className="flex h-6 shrink-0 items-center justify-between pr-2 pl-3.5 text-[11px] text-[#2b3f66]">
        <span>17 items</span>
        <div className="flex items-center gap-[3px]">
          <button type="button" aria-label="Details view" className="grid h-[22px] w-[22px] place-items-center border border-[#5fb6e8] bg-[#cce8f6]">
            <svg viewBox="0 0 16 12" className="h-3 w-4" aria-hidden="true"><path d="M.5.5h4v11h-4zM.5 4h4M.5 8h4" fill="#fff" stroke="#84898d" /><path d="M6 2h4M6 6h4M6 10h4M12 2h4M12 6h4M12 10h4" stroke="#555b60" /></svg>
          </button>
          <button type="button" aria-label="Large icons view" className="grid h-[22px] w-4 place-items-center"><PictureIcon className="size-3.5" /></button>
        </div>
      </footer>
    </section>
  );
}

function Watermark() {
  return (
    <div className="absolute right-[49px] bottom-2 flex items-center gap-[5px] font-['Liberation_Sans_Narrow','Open_Sans_Condensed',sans-serif] text-[38px] leading-none text-[#7ba6e6]">
      <span>ANY</span>
      <svg viewBox="0 0 60 64" className="h-16 w-[60px]" fill="none" stroke="#7ba6e6" strokeWidth="3.600" strokeLinejoin="round" strokeLinecap="round" aria-hidden="true">
        <path d="M9 9.500c-2-1.500-5 0-5 3V57l44-23" />
        <path d="M14 46V4l40 23-2 4-4-2" />
        <path d="m17 18 38 20-41 23-1-3" />
      </svg>
      <span>RUN</span>
    </div>
  );
}

function Taskbar() {
  return (
    <footer className="flex h-10 shrink-0 bg-linear-to-r from-[#001722] via-[#000f1c] to-[#000712] text-white">
      <button type="button" aria-label="Start" className="grid w-12 place-items-center">
        <svg viewBox="0 0 16 16" className="size-4" aria-hidden="true"><path d="M0 2.300 7.300 1.200v6.400H0zM8 1.100 16 0v7.600H8zM0 8.400h7.300v6.400L0 13.700zM8 8.400h8V16l-8-1.100z" fill="#fff" /></svg>
      </button>
      <label className="flex w-72 items-center gap-3 border border-[#c9cbcc] bg-[#f2f2f2] pl-[11px]">
        <svg viewBox="0 0 16 16" className="size-4 shrink-0" aria-hidden="true"><circle cx="10.500" cy="5.500" r="4.800" fill="none" stroke="#222" strokeWidth="1.200" /><path d="M7 9 .5 15.500" stroke="#222" strokeWidth="1.200" /></svg>
        <input aria-label="Type here to search" placeholder="Type here to search" className="min-w-0 flex-1 bg-transparent text-[14px] outline-none placeholder:text-[#333]" />
      </label>
      <div className="flex gap-px">
        <button type="button" aria-label="Task view" className="grid w-12 place-items-center">
          <svg viewBox="0 0 16 16" className="size-4" fill="none" stroke="#fff" aria-hidden="true"><path d="M.5.5v2h10v-2M.5 15.500v-2h10v2M1.500 4.500h8v7h-8zM13.500.5v4M13.500 9v6.500" strokeWidth="1.100" /><path d="M12 5.500h3v2.500h-3z" fill="#fff" stroke="none" /></svg>
        </button>
        <button type="button" aria-label="Microsoft Edge" className="grid w-[50px] place-items-center pl-0.5"><EdgeMark className="size-6" /></button>
        <button type="button" aria-label="File Explorer" className="grid w-12 place-items-center border-b-2 border-[#76b9ed] bg-[#33474f] pt-0.5">
          <svg viewBox="0 0 24 20" className="h-5 w-6" aria-hidden="true">
            <path d="M1 1.500h8l2 2h12V18H1z" fill="#f3a721" />
            <path d="M1 5h22v14H1z" fill="#fcd366" />
            <path d="M5 19v-8h14v8h-4v-4H9v4z" fill="#3b93d6" />
          </svg>
        </button>
        <button type="button" aria-label="Firefox" className="grid w-12 place-items-center"><FirefoxMark className="size-6" /></button>
      </div>
      <div className="ml-auto flex items-center">
        <div className="flex items-center gap-2">
          <svg viewBox="0 0 16 16" className="size-4" fill="none" stroke="#fff" strokeWidth="1.200" aria-hidden="true"><path d="m2.500 10.500 5.500-5.500 5.500 5.500" /></svg>
          <svg viewBox="0 0 16 16" className="size-4" fill="none" stroke="#fff" aria-hidden="true"><rect x="3.500" y="4.500" width="7" height="7" rx="1" /><path d="m10.500 7 3-1.500v5l-3-1.500M3.500 2c2-1.500 6-1.500 8 0M3.500 14c2 1.500 6 1.500 8 0" /></svg>
          <svg viewBox="0 0 16 16" className="size-4" fill="none" stroke="#fff" aria-hidden="true"><path d="M4.500 3.500h11v8h-11zM10 11.500V14M6.500 14.500h7M.5 2.500h4v3h-4zM2.500 5.500v9H6" /></svg>
          <svg viewBox="0 0 18 16" className="h-4 w-[18px]" fill="none" stroke="#fff" aria-hidden="true"><path d="M.5 5.500h2.500L7 2v12l-4-3.500H.5zM9 6c1 1 1 3 0 4M11.500 4c2 2 2 6 0 8M14 2c3 3 3 9 0 12" /></svg>
        </div>
        <div className="w-[68px] text-center text-[11px] leading-[18px]">
          <div>12:14 AM</div>
          <div>6/1/2025</div>
        </div>
        <button type="button" aria-label="Notifications" className="mr-[19px] ml-[9px]">
          <svg viewBox="0 0 18 18" className="size-[18px]" fill="none" stroke="#fff" strokeWidth="1.100" aria-hidden="true"><path d="M1.500 2.500h15v11h-5L9 16l-2.500-2.500h-5z" /></svg>
        </button>
        <div className="mr-1 h-10 w-px bg-[#46505c]" />
      </div>
    </footer>
  );
}

export default function App() {
  return (
    <div className="flex h-screen flex-col overflow-hidden bg-[linear-gradient(80deg,#00b4ff_0%,#00acff_22%,#0096f4_38%,#0075e6_55%,#0058d8_72%,#0047c6_86%,#003fb5_100%)] font-['Open_Sans','Noto_Sans',sans-serif]">
      <main className="relative flex min-h-0 flex-1 items-start justify-between">
        <div className="grid grid-flow-col grid-cols-[74px_75px_75px] grid-rows-[repeat(6,108px)]">
          {desktopItems.map((d) => (
            <DesktopItem key={d.label} {...d} />
          ))}
        </div>
        <div className="mr-1.5">
          <DesktopItem label="amnew.exe" icon={ExeIcon} />
        </div>
        <ExplorerWindow />
        <Watermark />
      </main>
      <Taskbar />
    </div>
  );
}
